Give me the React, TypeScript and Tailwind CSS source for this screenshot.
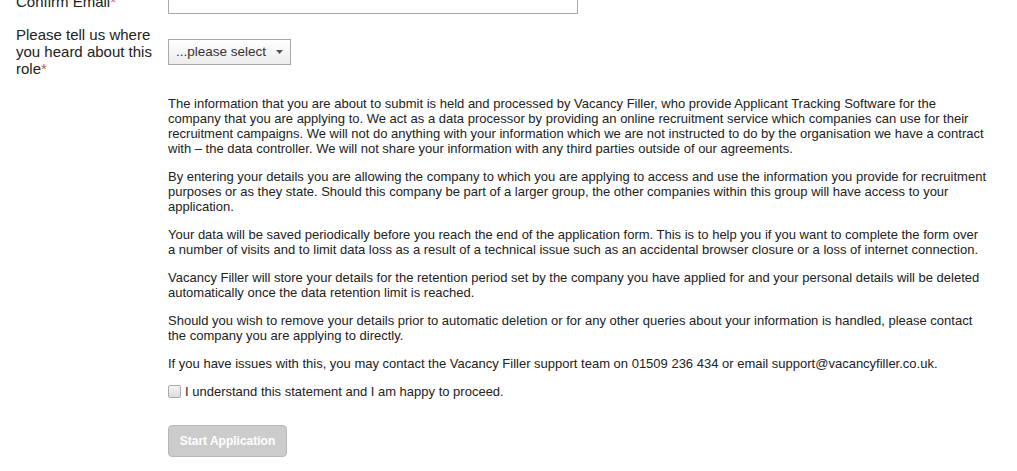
import React from 'react';

const paragraphs = [
  'The information that you are about to submit is held and processed by Vacancy Filler, who provide Applicant Tracking Software for the company that you are applying to. We act as a data processor by providing an online recruitment service which companies can use for their recruitment campaigns. We will not do anything with your information which we are not instructed to do by the organisation we have a contract with – the data controller. We will not share your information with any third parties outside of our agreements.',
  'By entering your details you are allowing the company to which you are applying to access and use the information you provide for recruitment purposes or as they state. Should this company be part of a larger group, the other companies within this group will have access to your application.',
  'Your data will be saved periodically before you reach the end of the application form. This is to help you if you want to complete the form over a number of visits and to limit data loss as a result of a technical issue such as an accidental browser closure or a loss of internet connection.',
  'Vacancy Filler will store your details for the retention period set by the company you have applied for and your personal details will be deleted automatically once the data retention limit is reached.',
  'Should you wish to remove your details prior to automatic deletion or for any other queries about your information is handled, please contact the company you are applying to directly.',
  'If you have issues with this, you may contact the Vacancy Filler support team on 01509 236 434 or email support@vacancyfiller.co.uk.',
];

export default function App() {
  return (
    <div className="w-[1017px] h-[471px] overflow-hidden bg-white font-['Liberation_Sans',Arial,sans-serif] text-[#222]">
      <div className="-mt-[13px]">
        {/* Confirm email row */}
        <div className="flex">
          <div className="w-[168px] shrink-0 pl-[16px] pr-[10px]">
            <label className="block mt-[6px] text-[15px] leading-[17px]">
              Confirm Email<span className="text-[#c7612a]">*</span>
            </label>
          </div>
          <input className="w-[410px] h-[27px] border border-[#a9a9a9] bg-white" />
        </div>

        {/* Source row */}
        <div className="flex mt-[12px]">
          <div className="w-[168px] shrink-0 pl-[16px] pr-[10px]">
            <label className="block text-[15px] leading-[17px]">
              Please tell us where you heard about this role<span className="text-[#c7612a]">*</span>
            </label>
          </div>
          <button className="mt-[13px] flex items-center justify-between w-[123px] h-[26px] border border-[#aaa] bg-gradient-to-b from-white to-[#ececec] pl-[7px] pr-[7px] text-[13.5px] text-[#333]">
            <span>...please select</span>
            <svg width="7" height="4" viewBox="0 0 7 4"><path d="M0 0h7L3.5 4z" fill="#555" /></svg>
          </button>
        </div>

        {/* Statement */}
        <div className="ml-[168px] mt-[19px] w-[819px] text-[13px] leading-[15px] text-[#222]">
          {paragraphs.map((p, i) => (
            <p key={i} className="mb-[13px]">{p}</p>
          ))}
          <label className="flex items-center gap-[4px] mt-[1px]">
            <span className="w-[13px] h-[13px] rounded-[2px] border border-[#aaa] bg-gradient-to-b from-[#f4f4f4] to-[#dcdcdc]" />
            <span>I understand this statement and I am happy to proceed.</span>
          </label>
          <button className="mt-[26px] w-[119px] h-[32px] rounded-[4px] border border-[#b8b8b8] bg-[#cccccc] text-white font-bold text-[12px]">
            Start Application
          </button>
        </div>
      </div>
    </div>
  );
}
